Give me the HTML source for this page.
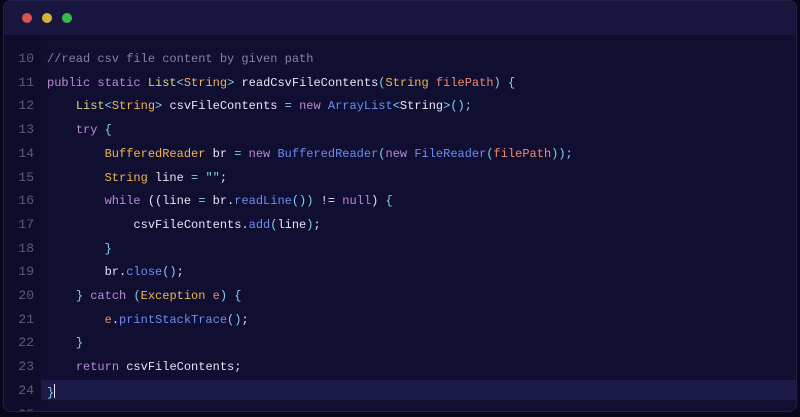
<!DOCTYPE html>
<html><head><style>
body{margin:0;width:800px;height:417px;background:#07061a;overflow:hidden;font-family:"Liberation Mono",monospace}
.win{position:absolute;left:3px;top:0;width:794px;height:412px;background:#110f31;border-radius:8px;overflow:hidden;border:1px solid #25224a;box-sizing:border-box}
.tb{height:34px;background:#18163f}
.dot{position:absolute;top:12px;width:10px;height:10px;border-radius:50%}
.gut{position:absolute;left:0;top:34px;bottom:0;width:37px;background:#0e0c2b}
.ln{position:absolute;left:0;width:30px;text-align:right;color:#5d5a7e;font-size:13px}
.cl{position:absolute;left:43px;white-space:pre;font-size:12px;color:#e6e4f4}
.hl{position:absolute;left:37px;right:0;top:379px;height:20px;background:#1c1a46}
.c{color:#85829f}.k{color:#b98ad9}.t{color:#d3d58c}.s{color:#eeb457}.p{color:#7fd3f0}.m{color:#6d8cf2}.v{color:#f08a6c}
.cur{display:inline-block;width:1px;height:14px;background:#e6e4f4;vertical-align:-2px}
</style></head><body>
<div class="win">
<div class="tb"></div>
<div class="dot" style="left:18px;background:#d9534f"></div>
<div class="dot" style="left:38px;background:#d4b431"></div>
<div class="dot" style="left:58px;background:#3cba4c"></div>
<div class="gut"></div>
<div class="hl"></div>
<div id="c"></div>
</div>
<script>
const L=[
'<span class="c">//read csv file content by given path</span>',
'<span class="k">public static</span> <span class="t">List</span><span class="p">&lt;</span><span class="s">String</span><span class="p">&gt;</span> readCsvFileContents<span class="p">(</span><span class="s">String</span> <span class="v">filePath</span><span class="p">)</span> <span class="p">{</span>',
'    <span class="t">List</span><span class="p">&lt;</span><span class="s">String</span><span class="p">&gt;</span> csvFileContents <span class="p">=</span> <span class="k">new</span> <span class="m">ArrayList</span><span class="p">&lt;</span>String<span class="p">&gt;();</span>',
'    <span class="k">try</span> <span class="p">{</span>',
'        <span class="s">BufferedReader</span> br <span class="p">=</span> <span class="k">new</span> <span class="m">BufferedReader</span><span class="p">(</span><span class="k">new</span> <span class="m">FileReader</span><span class="p">(</span><span class="v">filePath</span><span class="p">));</span>',
'        <span class="s">String</span> line <span class="p">=</span> <span class="p">""</span>;',
'        <span class="k">while</span> ((line <span class="p">=</span> br.<span class="m">readLine</span><span class="p">())</span> != <span class="k">null</span>) <span class="p">{</span>',
'            csvFileContents.<span class="m">add</span><span class="p">(</span>line<span class="p">)</span>;',
'        <span class="p">}</span>',
'        br.<span class="m">close</span><span class="p">()</span>;',
'    <span class="p">}</span> <span class="k">catch</span> <span class="p">(</span><span class="s">Exception</span> <span class="v">e</span><span class="p">)</span> <span class="p">{</span>',
'        <span class="v">e</span>.<span class="m">printStackTrace</span><span class="p">()</span>;',
'    <span class="p">}</span>',
'    <span class="k">return</span> csvFileContents;',
'<span class="p">}</span><span class="cur"></span>'];
let h='';L.forEach((s,i)=>{const y=51+i*23.7;h+=`<div class="ln" style="top:${y-1}px">${10+i}</div><div class="cl" style="top:${y}px">${s}</div>`});
h+=`<div class="ln" style="top:${50+15*23.7}px">25</div>`;
document.getElementById('c').innerHTML=h;
</script>
</body></html>
